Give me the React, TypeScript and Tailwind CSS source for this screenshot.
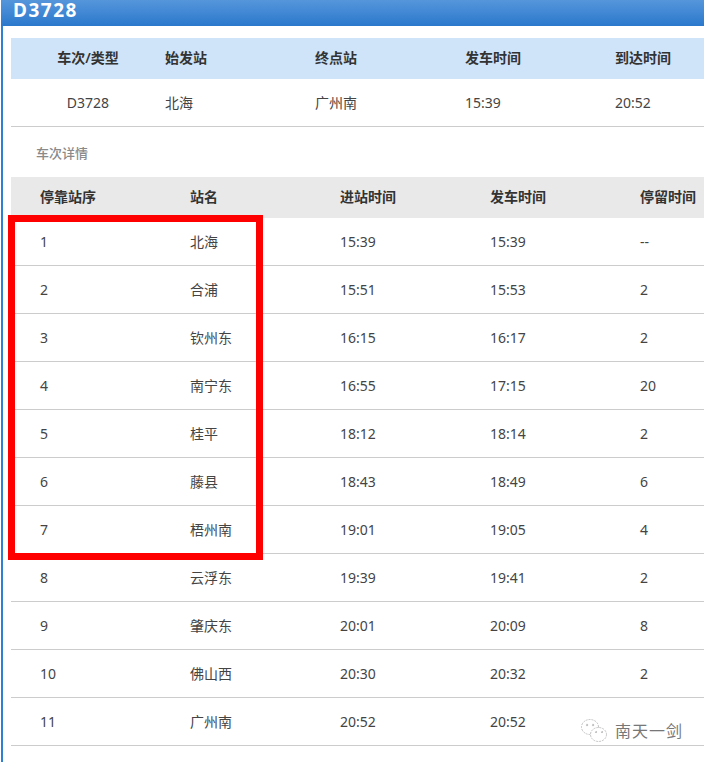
const stops = [
  ['1', '北海', '15:39', '15:39', '--'],
  ['2', '合浦', '15:51', '15:53', '2'],
  ['3', '钦州东', '16:15', '16:17', '2'],
  ['4', '南宁东', '16:55', '17:15', '20'],
  ['5', '桂平', '18:12', '18:14', '2'],
  ['6', '藤县', '18:43', '18:49', '6'],
  ['7', '梧州南', '19:01', '19:05', '4'],
  ['8', '云浮东', '19:39', '19:41', '2'],
  ['9', '肇庆东', '20:01', '20:09', '8'],
  ['10', '佛山西', '20:30', '20:32', '2'],
  ['11', '广州南', '20:52', '20:52', ''],
];

const App = () => {
  return (
    <div className="relative h-[762px] w-[704px] overflow-hidden bg-white pl-px font-['Noto_Sans','Noto_Sans_CJK_SC',sans-serif] text-sm text-[#444]">
      <div className="flex h-[26px] items-center bg-gradient-to-b from-[#5596db] to-[#2a78cc] pb-[7px] pl-3">
        <h1 className="text-[19px] leading-[18px] font-bold tracking-[1.5px] text-white">D3728</h1>
      </div>

      <div className="h-[736px] border-l-2 border-[#2f80d0] pt-3 pl-2">
        <div className="grid h-[41px] grid-cols-[154px_150px_150px_150px_150px] items-center bg-[#cfe4f9] pb-0.5 font-semibold text-[#333]">
          <span className="text-center">车次/类型</span>
          <span>始发站</span>
          <span>终点站</span>
          <span>发车时间</span>
          <span>到达时间</span>
        </div>
        <div className="grid h-12 grid-cols-[154px_150px_150px_150px_150px] items-center border-b border-[#ccc]">
          <span className="text-center">D3728</span>
          <span>北海</span>
          <span>广州南</span>
          <span>15:39</span>
          <span>20:52</span>
        </div>

        <div className="flex h-[50px] items-center pt-0.5 pl-[25px] text-[13px] font-medium text-[#8a8a8a]">车次详情</div>

        <div className="grid h-[41px] grid-cols-[150px_150px_150px_150px_150px] items-center bg-[#e9e9e9] pb-0.5 pl-[29px] font-semibold text-[#333]">
          <span>停靠站序</span>
          <span>站名</span>
          <span>进站时间</span>
          <span>发车时间</span>
          <span>停留时间</span>
        </div>
        {stops.map((row) => (
          <div
            key={row[0]}
            className="grid h-12 grid-cols-[150px_150px_150px_150px_150px] items-center border-b border-[#ccc] pl-[29px]"
          >
            {row.map((cell, j) => (
              <span key={j}>{cell}</span>
            ))}
          </div>
        ))}
      </div>

      {/* red annotation box */}
      <div className="absolute top-[215px] left-2 h-[345px] w-[255px] border-[7px] border-[#ff0000]" />

      {/* watermark */}
      <div className="absolute top-[718px] left-[580px] flex items-center gap-[7px] text-[#777]">
        <svg width="28" height="25" viewBox="0 0 28 25" fill="none" stroke="#bbb" strokeWidth="0.9" strokeDasharray="2 1">
          <ellipse cx="10" cy="9" rx="8.5" ry="7.5" />
          <ellipse cx="18.5" cy="16.5" rx="8" ry="7" fill="#fff" />
          <circle cx="7" cy="7" r="0.8" fill="#aaa" />
          <circle cx="13" cy="7" r="0.8" fill="#aaa" />
          <circle cx="16" cy="14" r="0.7" fill="#aaa" />
          <circle cx="22" cy="14" r="0.7" fill="#aaa" />
        </svg>
        <span className="text-base leading-6 tracking-[1px]">南天一剑</span>
      </div>
    </div>
  );
};

export default App;
